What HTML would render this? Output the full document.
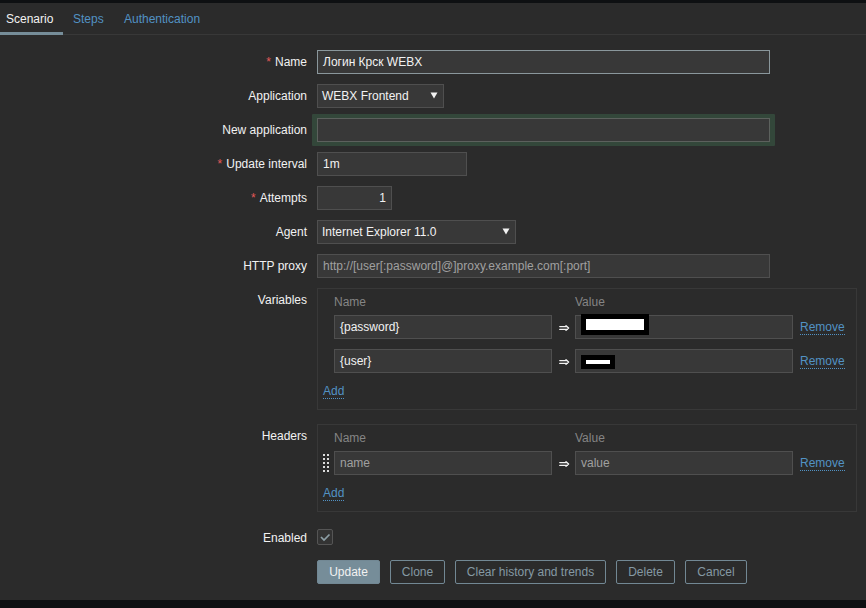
<!DOCTYPE html>
<html><head><meta charset="utf-8">
<style>
*{box-sizing:border-box;margin:0;padding:0}
html,body{width:866px;height:608px;overflow:hidden;background:#0e1012}
body{font-family:"Liberation Sans",sans-serif;font-size:12px;color:#f2f2f2;position:relative}
.a{position:absolute}
.main{position:absolute;left:0;top:3px;width:866px;height:597px;background:#2b2b2b}
.t{position:absolute;line-height:14px;white-space:pre}
.lbl{position:absolute;left:0;width:307px;text-align:right;line-height:14px;white-space:pre}
.ast{color:#e45959;margin-right:4px}
.in{position:absolute;height:24px;background:#383838;border:1px solid #4f4f4f;line-height:22px;padding-left:5px;white-space:pre;overflow:hidden}
.lnk{color:#5292c4;border-bottom:1px dotted #5292c4}
.hdr{color:#858585}
.box{position:absolute;border:1px solid #383838}
.btn{position:absolute;top:560px;height:24px;line-height:22px;text-align:center;border:1px solid #728894;color:#8599a3;border-radius:2px;white-space:pre}
.btn.pri{background:#768d99;color:#f2f2f2}
.ph{color:#a0a0a0}
</style></head><body>
<div class="main"></div>

<!-- tabs -->
<div class="a" style="left:0;top:34px;width:866px;height:1px;background:#383838"></div>
<div class="a" style="left:0;top:32px;width:63px;height:3px;background:#768d99"></div>
<div class="t" style="left:6px;top:12px">Scenario</div>
<div class="t lnk2" style="left:73px;top:12px;color:#5292c4">Steps</div>
<div class="t" style="left:124px;top:12px;color:#5292c4">Authentication</div>

<!-- labels -->
<div class="lbl" style="top:55px"><span class="ast">*</span>Name</div>
<div class="lbl" style="top:89px">Application</div>
<div class="lbl" style="top:123px">New application</div>
<div class="lbl" style="top:157px"><span class="ast">*</span>Update interval</div>
<div class="lbl" style="top:191px"><span class="ast">*</span>Attempts</div>
<div class="lbl" style="top:225px">Agent</div>
<div class="lbl" style="top:259px">HTTP proxy</div>
<div class="lbl" style="top:293px">Variables</div>
<div class="lbl" style="top:429px">Headers</div>
<div class="lbl" style="top:531px">Enabled</div>

<!-- inputs -->
<div class="in" style="left:317px;top:50px;width:453px;border-color:#8a979c">Логин Крск WEBX</div>
<div class="in" style="left:317px;top:84px;width:127px;padding-left:4px">WEBX Frontend</div>
<svg class="a" style="left:430px;top:92px" width="8" height="7"><polygon points="0.5,0.5 7.5,0.5 4,6.5" fill="#f2f2f2"/></svg>
<div class="a" style="left:312px;top:114px;width:463px;height:32px;background:#33473a;border-radius:1px"></div>
<div class="in" style="left:317px;top:118px;width:453px;border-color:#5c615d"></div>
<div class="in" style="left:317px;top:152px;width:150px">1m</div>
<div class="in" style="left:317px;top:186px;width:75px;text-align:right;padding-right:5px">1</div>
<div class="in" style="left:317px;top:220px;width:199px;padding-left:4px">Internet Explorer 11.0</div>
<svg class="a" style="left:502px;top:228px" width="8" height="7"><polygon points="0.5,0.5 7.5,0.5 4,6.5" fill="#f2f2f2"/></svg>
<div class="in ph" style="left:317px;top:254px;width:453px">http://[user[:password]@]proxy.example.com[:port]</div>

<!-- variables -->
<div class="box" style="left:317px;top:288px;width:540px;height:122px"></div>
<div class="t hdr" style="left:334px;top:295px">Name</div>
<div class="t hdr" style="left:575px;top:295px">Value</div>
<div class="in" style="left:334px;top:315px;width:218px">{password}</div>
<svg class="a" style="left:558px;top:324px" width="12" height="8"><path d="M1.8 2.6H9.3M1.8 5.4H9.3M8 1.7L10.6 4L8 6.3" stroke="#f2f2f2" stroke-width="1.4" fill="none" stroke-linecap="round" stroke-linejoin="round"/></svg>
<div class="in" style="left:575px;top:315px;width:218px"></div>
<div class="a" style="left:581px;top:314px;width:68px;height:21px;background:#000"></div>
<div class="a" style="left:586px;top:319px;width:58px;height:11px;background:#fff"></div>
<div class="t" style="left:800px;top:320px"><span class="lnk">Remove</span></div>
<div class="in" style="left:334px;top:349px;width:218px">{user}</div>
<svg class="a" style="left:558px;top:358px" width="12" height="8"><path d="M1.8 2.6H9.3M1.8 5.4H9.3M8 1.7L10.6 4L8 6.3" stroke="#f2f2f2" stroke-width="1.4" fill="none" stroke-linecap="round" stroke-linejoin="round"/></svg>
<div class="in" style="left:575px;top:349px;width:218px"></div>
<div class="a" style="left:581px;top:355px;width:34px;height:14px;background:#000"></div>
<div class="a" style="left:586px;top:360px;width:24px;height:4px;background:#fff"></div>
<div class="t" style="left:800px;top:354px"><span class="lnk">Remove</span></div>
<div class="t" style="left:323px;top:384px"><span class="lnk">Add</span></div>

<!-- headers -->
<div class="box" style="left:317px;top:424px;width:540px;height:88px"></div>
<div class="t hdr" style="left:334px;top:431px">Name</div>
<div class="t hdr" style="left:575px;top:431px">Value</div>
<svg class="a" style="left:323px;top:454px" width="6" height="18" fill="#dcdcdc">
<rect x="0" y="0" width="2" height="2"/><rect x="4" y="0" width="2" height="2"/>
<rect x="0" y="4" width="2" height="2"/><rect x="4" y="4" width="2" height="2"/>
<rect x="0" y="8" width="2" height="2"/><rect x="4" y="8" width="2" height="2"/>
<rect x="0" y="12" width="2" height="2"/><rect x="4" y="12" width="2" height="2"/>
<rect x="0" y="16" width="2" height="2"/><rect x="4" y="16" width="2" height="2"/>
</svg>
<div class="in ph" style="left:334px;top:451px;width:218px">name</div>
<svg class="a" style="left:558px;top:460px" width="12" height="8"><path d="M1.8 2.6H9.3M1.8 5.4H9.3M8 1.7L10.6 4L8 6.3" stroke="#f2f2f2" stroke-width="1.4" fill="none" stroke-linecap="round" stroke-linejoin="round"/></svg>
<div class="in ph" style="left:575px;top:451px;width:218px">value</div>
<div class="t" style="left:800px;top:456px"><span class="lnk">Remove</span></div>
<div class="t" style="left:323px;top:486px"><span class="lnk">Add</span></div>

<!-- enabled -->
<div class="a" style="left:317px;top:529px;width:16px;height:16px;border:1px solid #555;background:#333;border-radius:2px"></div>
<svg class="a" style="left:317px;top:529px" width="16" height="16"><path d="M4 8L7 11L12.5 5.5" stroke="#8d9fa6" stroke-width="1.7" fill="none"/></svg>

<!-- buttons -->
<div class="btn pri" style="left:317px;width:63px">Update</div>
<div class="btn" style="left:390px;width:55px">Clone</div>
<div class="btn" style="left:455px;width:151px">Clear history and trends</div>
<div class="btn" style="left:616px;width:59px">Delete</div>
<div class="btn" style="left:685px;width:62px">Cancel</div>
</body></html>
